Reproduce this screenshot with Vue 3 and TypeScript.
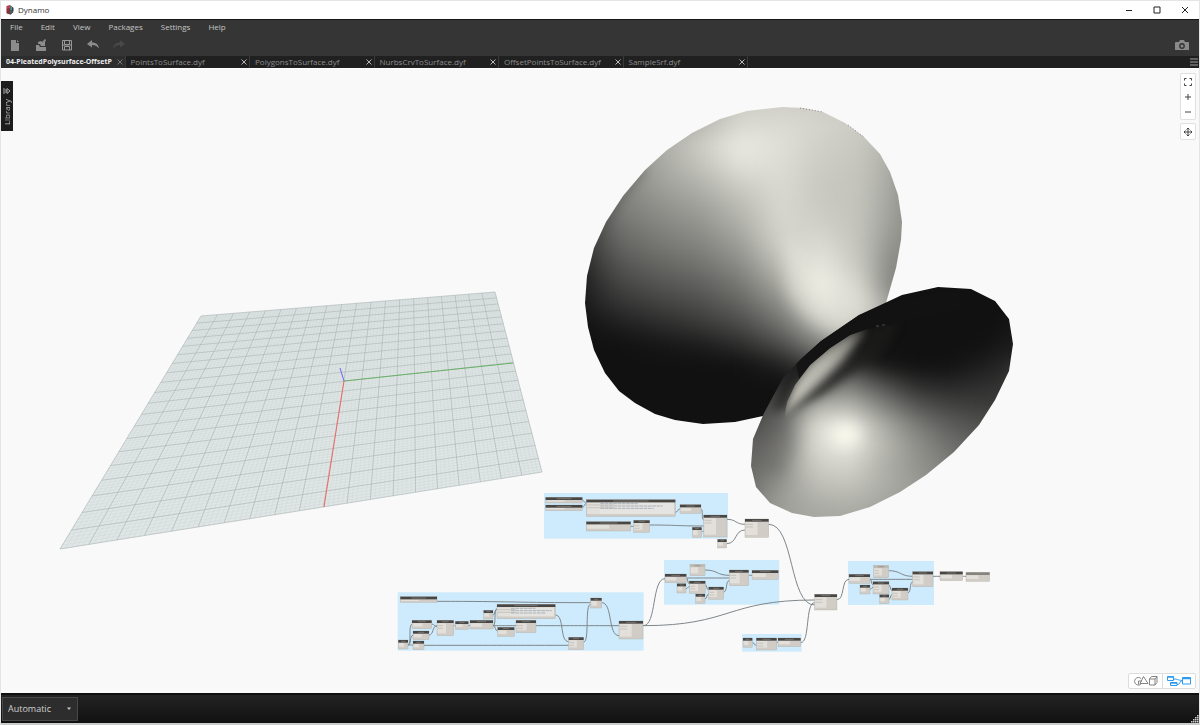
<script setup lang="ts">
import { ref } from 'vue'

type Point = [number, number]
type Wire = [number, number, number, number]
interface GraphNode { x: number; y: number; w: number; h: number; tone: string }
interface Cluster { origin: Point; groups: number[][]; nodes: GraphNode[]; wires: Wire[] }
interface Band { id: string; y: number; h: number; stops: { offset: number; color: string }[] }

const menus = ['File', 'Edit', 'View', 'Packages', 'Settings', 'Help']
const tabs = [
  '04-PleatedPolysurface-OffsetP',
  'PointsToSurface.dyf',
  'PolygonsToSurface.dyf',
  'NurbsCrvToSurface.dyf',
  'OffsetPointsToSurface.dyf',
  'SampleSrf.dyf',
]
const activeTab = ref(0)
const runMode = ref('Automatic')

/* Ground plane: a unit square projected onto four screen corners. */
const corners: Point[] = [[201, 316], [495, 292], [542, 472], [60, 549]]
function project(u: number, v: number): Point {
  const [a, b, c, d] = corners
  const dx1 = b[0] - c[0], dx2 = d[0] - c[0], sx = a[0] - b[0] + c[0] - d[0]
  const dy1 = b[1] - c[1], dy2 = d[1] - c[1], sy = a[1] - b[1] + c[1] - d[1]
  const det = dx1 * dy2 - dx2 * dy1
  const g = (sx * dy2 - dx2 * sy) / det
  const h = (dx1 * sy - sx * dy1) / det
  const w = g * u + h * v + 1
  return [
    ((b[0] - a[0] + g * b[0]) * u + (d[0] - a[0] + h * d[0]) * v + a[0]) / w,
    ((b[1] - a[1] + g * b[1]) * u + (d[1] - a[1] + h * d[1]) * v + a[1]) / w,
  ]
}
function gridPath(cells: number): string {
  const seg = (p: Point, q: Point) => `M${p[0].toFixed(2)} ${p[1].toFixed(2)}L${q[0].toFixed(2)} ${q[1].toFixed(2)}`
  let d = ''
  for (let i = 0; i <= cells; i++) {
    const t = i / cells
    d += seg(project(t, 0), project(t, 1)) + seg(project(0, t), project(1, t))
  }
  return d
}
const minorGrid = gridPath(100)
const majorGrid = gridPath(20)
const plane = corners.map((p) => p.join(',')).join(' ')

/* Surface shading: brightness rows, interpolated across and smoothed down. */
function bands(name: string, top: number, step: number, rows: number[][]): Band[] {
  return rows.map((row, r) => ({
    id: `${name}${r}`,
    y: top + r * step - step / 2,
    h: step + 1,
    stops: row.map((v, i) => ({
      offset: i / (row.length - 1),
      color: `rgb(${v},${v},${Math.round(v - Math.max(0, v - 40) * 0.045)})`,
    })),
  }))
}
const backBands = bands('back', 85, 20, [
  [90, 110, 130, 160, 205, 208, 205, 200, 190],
  [90, 110, 135, 170, 205, 208, 205, 200, 190],
  [90, 115, 155, 185, 217, 219, 212, 204, 185],
  [90, 130, 172, 204, 234, 223, 208, 200, 175],
  [90, 132, 168, 195, 225, 221, 204, 197, 165],
  [85, 130, 160, 178, 205, 218, 201, 196, 160],
  [78, 125, 146, 162, 188, 216, 202, 195, 155],
  [65, 114, 132, 147, 174, 214, 208, 195, 148],
  [52, 100, 118, 131, 157, 208, 220, 195, 135],
  [40, 84, 101, 114, 138, 190, 232, 200, 120],
  [30, 68, 83, 95, 118, 166, 240, 214, 110],
  [24, 50, 64, 76, 97, 138, 218, 226, 140],
  [17, 30, 42, 55, 73, 110, 178, 205, 150],
  [17, 17, 22, 28, 44, 74, 130, 160, 130],
  [17, 17, 17, 17, 17, 32, 70, 90, 80],
  [17, 17, 17, 17, 17, 17, 20, 40, 40],
  [17, 17, 17, 17, 17, 17, 17, 17, 17],
  [17, 17, 17, 17, 17, 17, 17, 17, 17],
  [17, 17, 17, 17, 17, 17, 17, 17, 17],
])
const frontBands = bands('front', 265, 20, [
  [17, 17, 17, 17, 17, 17, 17, 17, 17],
  [17, 17, 17, 17, 17, 17, 17, 17, 17],
  [17, 17, 17, 17, 17, 17, 17, 17, 17],
  [17, 17, 17, 17, 17, 17, 17, 17, 18],
  [17, 17, 17, 22, 17, 17, 17, 17, 28],
  [24, 26, 36, 60, 22, 17, 17, 28, 42],
  [40, 50, 96, 124, 82, 44, 38, 45, 52],
  [58, 84, 174, 184, 130, 86, 66, 60, 60],
  [66, 112, 222, 234, 176, 125, 94, 80, 74],
  [80, 140, 220, 234, 186, 146, 112, 94, 84],
  [98, 152, 204, 214, 178, 150, 125, 104, 90],
  [110, 154, 190, 195, 175, 156, 135, 110, 96],
  [128, 160, 172, 176, 166, 150, 135, 115, 100],
  [130, 160, 165, 165, 160, 148, 135, 115, 100],
])

/* Node graph, laid out in canvas units that are drawn at one third scale. */
const n = (x: number, y: number, w: number, h: number, tone = 'dark'): GraphNode => ({ x, y, w, h, tone })
const clusters: Cluster[] = [
  {
    origin: [530, 485],
    groups: [[42, 24, 552, 137]],
    nodes: [
      n(47, 37, 110, 17), n(47, 60, 110, 17), n(169, 44, 267, 50), n(450, 59, 63, 26),
      n(169, 110, 133, 28), n(311, 106, 48, 36), n(521, 90, 70, 66), n(487, 127, 28, 30),
      n(563, 163, 27, 26), n(645, 102, 71, 55),
    ],
    wires: [
      [157, 46, 169, 54], [157, 67, 169, 56], [436, 82, 450, 72], [513, 72, 521, 105],
      [302, 124, 311, 124], [359, 120, 521, 123], [515, 140, 521, 138], [591, 103, 645, 118],
      [590, 176, 645, 135],
    ],
  },
  {
    origin: [390, 585],
    groups: [[23, 22, 738, 175]],
    nodes: [
      n(31, 35, 110, 17), n(321, 58, 175, 43), n(281, 76, 28, 26), n(66, 106, 59, 25),
      n(69, 138, 48, 26), n(141, 106, 50, 46), n(196, 109, 39, 24), n(240, 106, 69, 26),
      n(323, 127, 50, 27), n(378, 106, 60, 37), n(25, 165, 29, 27), n(69, 168, 33, 26),
      n(536, 157, 45, 37), n(602, 39, 33, 30), n(687, 108, 72, 54),
    ],
    wires: [
      [141, 49, 602, 53], [54, 180, 66, 118], [54, 180, 69, 151], [54, 180, 69, 180],
      [102, 181, 536, 181], [125, 117, 141, 125], [117, 150, 141, 122], [191, 122, 196, 122],
      [235, 122, 240, 122], [309, 122, 323, 138], [309, 122, 321, 72], [309, 90, 321, 72],
      [309, 122, 378, 122], [438, 122, 687, 122], [496, 90, 536, 170], [581, 171, 602, 58],
      [635, 53, 687, 152],
    ],
  },
  {
    origin: [650, 550],
    groups: [[42, 30, 346, 134], [594, 33, 258, 132], [276, 252, 179, 53]],
    nodes: [
      n(45, 72, 64, 26), n(120, 43, 45, 34, 'light'), n(81, 101, 27, 28), n(118, 93, 48, 37),
      n(137, 132, 28, 28), n(176, 111, 45, 37), n(238, 60, 58, 47), n(306, 61, 79, 27),
      n(597, 73, 63, 27), n(671, 46, 45, 37, 'light'), n(630, 105, 30, 27), n(669, 95, 48, 37),
      n(689, 134, 28, 27), n(726, 114, 48, 36), n(788, 65, 61, 45), n(870, 65, 68, 27),
      n(948, 67, 71, 27, 'mid'), n(494, 133, 67, 47), n(279, 264, 28, 28), n(319, 264, 61, 36),
      n(384, 264, 68, 26),
    ],
    wires: [
      [109, 84, 238, 84], [109, 84, 118, 102], [165, 60, 238, 76], [108, 116, 118, 110],
      [165, 104, 176, 120], [165, 147, 176, 132], [221, 126, 238, 92], [296, 76, 306, 76],
      [660, 88, 788, 88], [660, 88, 669, 104], [716, 62, 788, 79], [660, 118, 669, 112],
      [717, 106, 726, 122], [717, 148, 726, 134], [774, 128, 788, 96], [849, 79, 870, 79],
      [938, 79, 948, 79], [561, 149, 597, 88], [307, 278, 319, 286], [380, 277, 384, 277],
      [452, 278, 494, 158], [-20, 227, 494, 150], [-20, 227, 45, 86], [356, -77, 494, 165],
    ],
  },
]
const headTone: Record<string, string> = { dark: '#474644', mid: '#85837d', light: '#bdbab4' }
function wirePath([x1, y1, x2, y2]: Wire): string {
  const k = Math.abs(x2 - x1) * 0.5 + Math.min(8, Math.abs(y2 - y1) * 0.1)
  return `M${x1} ${y1}C${x1 + k} ${y1} ${x2 - k} ${y2} ${x2} ${y2}`
}
</script>

<template>
  <div class="window">
    <header class="titlebar">
      <svg class="logo" viewBox="0 0 24 30" aria-hidden="true">
        <path d="M2 3l11-2 9 7v14l-8 7-12-4z" fill="#4b4a52" />
        <path d="M2 3l10-2v9L2 12z" fill="#c3424a" />
        <path d="M2 12l10-2v17L2 25z" fill="#8d3038" />
        <path d="M13 3l5 3v8l-5 2z" fill="#4f9a9c" />
        <path d="M13 17l7-3v8l-7 6z" fill="#3f6f4d" />
        <path d="M18 6l4 3v8l-4 2z" fill="#30405c" />
      </svg>
      <span class="title">Dynamo</span>
      <div class="winbuttons">
        <button type="button" aria-label="Minimize"><svg viewBox="0 0 8 8"><path d="M1 4.500h6" /></svg></button>
        <button type="button" aria-label="Maximize"><svg viewBox="0 0 8 8"><path d="M1 1h6v6H1z" /></svg></button>
        <button type="button" aria-label="Close"><svg viewBox="0 0 8 8"><path d="M1 1l6 6M7 1l-6 6" /></svg></button>
      </div>
    </header>

    <div class="chrome">
      <nav class="menubar">
        <button v-for="m in menus" :key="m" type="button">{{ m }}</button>
      </nav>
      <div class="toolbar">
        <button type="button" aria-label="New"><svg viewBox="0 0 12 12"><path d="M2 1h5v3h3v8H2zM8 1l2 2H8z" fill="#8c8c8c" /></svg></button>
        <button type="button" aria-label="Open"><svg viewBox="0 0 12 12"><path d="M1 6h3l1 2h6v4H1zM3 3l3-1 1 1 3-3 1 1-1 2v4H6L5 5H3z" fill="#8c8c8c" /></svg></button>
        <button type="button" aria-label="Save"><svg viewBox="0 0 12 12"><path d="M1.500 1.500h9v9.500h-9zM3.500 2v3.500h5V2M3.500 11V7.500h5V11M2 6h8" fill="none" stroke="#989898" /></svg></button>
        <button type="button" aria-label="Undo"><svg viewBox="0 0 12 12"><path d="M0 5l5-4v2.500c4 0 6.500 2 7 6-2-2.500-4-3.500-7-3.500v2.500z" fill="#8c8c8c" /></svg></button>
        <button type="button" aria-label="Redo" disabled><svg viewBox="0 0 12 12"><path d="M12 5L7 1v2.500c-4 0-6.500 2-7 6C2 7 4 6 7 6v2.500z" fill="#484848" /></svg></button>
        <button class="camera" type="button" aria-label="Export image">
          <svg viewBox="0 0 14 11"><path d="M1 2h3l1-2h4l1 2h3q1 0 1 1v7H0V3q0-1 1-1z" fill="#8a8a8a" /><circle cx="7" cy="6" r="2.200" fill="#8a8a8a" stroke="#353535" stroke-width="1.400" /></svg>
        </button>
      </div>
      <div class="tabstrip">
        <div class="tabs">
          <div v-for="(t, i) in tabs" :key="t" class="tab" :class="{ active: i === activeTab }">
            <button class="tabname" type="button" @click="activeTab = i">{{ t }}</button>
            <button class="tabclose" type="button" :aria-label="`Close ${t}`"><svg viewBox="0 0 6 6"><path d="M.5.5l5 5M5.500.5l-5 5" /></svg></button>
          </div>
        </div>
        <button class="tablist" type="button" aria-label="All tabs"><svg viewBox="0 0 8 8"><path d="M0 1h8M0 4h8M0 7h8" stroke="#a0a0a0" /></svg></button>
      </div>
    </div>

    <main class="workspace">
      <svg class="scene" viewBox="0 69 1200 624" preserveAspectRatio="xMidYMid slice" role="img" aria-label="3D preview and node graph">
        <defs>
          <filter id="soft" filterUnits="userSpaceOnUse" x="520" y="60" width="560" height="500" color-interpolation-filters="sRGB"><feGaussianBlur stdDeviation="9" /></filter>
          <filter id="glow" x="-80%" y="-100%" width="260%" height="300%" color-interpolation-filters="sRGB"><feGaussianBlur stdDeviation="8" /></filter>
          <filter id="edge" x="-40%" y="-40%" width="180%" height="180%" color-interpolation-filters="sRGB"><feGaussianBlur stdDeviation="4" /></filter>
          <linearGradient v-for="b in [...backBands, ...frontBands]" :id="b.id" :key="b.id">
            <stop v-for="s in b.stops" :key="s.offset" :offset="s.offset" :stop-color="s.color" />
          </linearGradient>
          <linearGradient id="throat" gradientUnits="userSpaceOnUse" x1="792" y1="400" x2="868" y2="334">
            <stop offset="0" stop-color="#c8c7bd" /><stop offset=".5" stop-color="#b4b3aa" /><stop offset=".8" stop-color="#8d8c85" /><stop offset="1" stop-color="#4a4947" />
          </linearGradient>
          <clipPath id="backClip"><path d="M747 111L782 107 803 108 823 112 845 123 864 137 880 154 890 172 898 195 902 222 901 240 896 268 886 303 860 345 800 400 763 416 735 422 703 424 675 420 655 414 635 403 619 391 605 373 594 350 588 327 585 303 587 276 594 248 606 222 623 196 645 170 667 150 692 133 720 119z" /></clipPath>
          <clipPath id="frontClip"><path d="M887 302L902 295 938 287 971 289 995 301 1009 319 1013 344 1009 371 995 400 979 425 954 452 926 475 900 492 870 507 840 516 814 517 792 513 770 503 756 487 751 466 753 439 764 413 783 378 801 359 821 341 859 315z" /></clipPath>
          <clipPath id="throatClip"><path d="M785 414L787 402 795 385 810 365 830 348 850 335 867 329 900 322 960 310V520H785z" /></clipPath>
        </defs>

        <polygon :points="plane" fill="#dfe6e5" />
        <path :d="minorGrid" class="minor" />
        <path :d="majorGrid" class="major" />
        <path d="M344 381L513 363" stroke="#68b068" />
        <path d="M344 381L324 507" stroke="#f06868" />
        <path d="M344 381L340 368" stroke="#6868ee" />

        <g clip-path="url(#backClip)">
          <g filter="url(#soft)">
            <rect v-for="b in backBands" :key="b.id" x="580" :y="b.y" width="320" :height="b.h" :fill="`url(#${b.id})`" />
            <rect x="900" y="75" width="60" height="260" fill="#8f8e88" />
            <rect x="540" y="75" width="40" height="180" fill="#504f4e" />
            <rect x="540" y="255" width="40" height="200" fill="#111" />
          </g>
          <path d="M786 235q26 25 40 52t34 30l-20 20q-46-20-54-50z" fill="#f4f4e8" opacity=".4" filter="url(#glow)" />
          <path d="M586 276L594 248 606 222 623 196 645 170" fill="none" stroke="#333" stroke-width="4" opacity=".4" filter="url(#edge)" />
        </g>
        <path d="M800 108L823 112M848 125L864 137" stroke="#88867f" stroke-dasharray="1 2" />

        <g clip-path="url(#frontClip)">
          <g filter="url(#soft)">
            <rect x="1014" y="255" width="60" height="110" fill="#1c1c1c" />
            <rect x="1014" y="365" width="60" height="190" fill="#4a4a48" />
            <rect x="700" y="255" width="50" height="160" fill="#222" />
            <rect x="700" y="415" width="50" height="140" fill="#686764" />
            <rect v-for="b in frontBands" :key="b.id" x="750" :y="b.y" width="264" :height="b.h" :fill="`url(#${b.id})`" />
          </g>
          <path d="M786 416L796 445 782 480 758 470 762 425 785 385z" fill="#5c5b58" opacity=".4" filter="url(#glow)" />
          <ellipse cx="846" cy="435" rx="14" ry="9" fill="#fffff2" filter="url(#glow)" />
          <g clip-path="url(#throatClip)">
            <path d="M786 413L812 390 838 368 858 350 866 326 900 322 886 350 852 373 822 395z" fill="#1d1d1c" opacity=".7" filter="url(#edge)" />
            <path d="M780 412L796 370 820 342 862 320 864 334 854 346 842 361 824 378 805 395 786 412z" fill="url(#throat)" filter="url(#edge)" />
          </g>
          <path d="M772 412L783 378 821 341 860 315 867 329 850 335 830 348 810 365 795 385 786 408z" fill="#181818" opacity=".6" filter="url(#edge)" />
          <path d="M796 362L821 341 859 315 900 300 960 290V310L900 322 867 329 850 335 830 348 810 365 799 379z" fill="#131313" opacity=".85" />
          <path d="M876 326h3M882 325h3" stroke="#4a4a48" />
        </g>

        <g v-for="(c, ci) in clusters" :key="`g${ci}`" :transform="`translate(${c.origin[0]} ${c.origin[1]}) scale(.3333)`">
          <rect v-for="(g, gi) in c.groups" :key="gi" :x="g[0]" :y="g[1]" :width="g[2]" :height="g[3]" fill="#cdebfd" />
        </g>
        <g v-for="(c, ci) in clusters" :key="`c${ci}`" :transform="`translate(${c.origin[0]} ${c.origin[1]}) scale(.3333)`">
          <path v-for="(w, wi) in c.wires" :key="`w${wi}`" :d="wirePath(w)" class="wire" />
          <g v-for="(d, di) in c.nodes" :key="`n${di}`">
            <rect :x="d.x" :y="d.y" :width="d.w" :height="d.h" fill="#d1cdc6" stroke="#aaa69f" />
            <rect :x="d.x + 2" :y="d.y + 9" :width="d.w * 0.5" :height="Math.max(4, d.h - 16)" fill="#e3e0dc" />
            <rect v-if="d.w > 150" :x="d.x + 40" :y="d.y + 9" :width="d.w - 44" :height="d.h - 16" fill="#e6e4e1" />
            <path v-if="d.w > 150" :d="`M${d.x + 42} ${d.y + 12}h${d.w * 0.42}m${-d.w * 0.42} 7h${d.w * 0.7}m${-d.w * 0.7} 7h${d.w * 0.6}`" stroke="#8b99a8" stroke-width="2" stroke-dasharray="11 2" fill="none" />
            <path v-if="d.h > 34" :d="`M${d.x + 3} ${d.y + 16}h${d.w * 0.3}m${-d.w * 0.3} 8h${d.w * 0.3}`" stroke="#b7b3ad" stroke-width="2" fill="none" />
            <rect :x="d.x" :y="d.y" :width="d.w" height="8" :fill="headTone[d.tone]" />
            <path :d="`M${d.x + d.w * 0.3} ${d.y + 4}h${d.w * 0.4}`" stroke="#8c8984" stroke-width="2" />
          </g>
        </g>
      </svg>

      <button class="library" type="button">
        <svg viewBox="0 0 8 8" aria-hidden="true"><path d="M1 1v6M3 2v4M4 1.500L7 4 4 6.500z" stroke="#aaa" stroke-width="1" fill="none" /></svg>
        <span>Library</span>
      </button>

      <div class="viewtools">
        <div class="card">
          <button type="button" aria-label="Fit to view"><svg viewBox="0 0 10 10"><path d="M1.500 3.500v-2h2M6.500 1.500h2v2M8.500 6.500v2h-2M3.500 8.500h-2v-2" /></svg></button>
          <button type="button" aria-label="Zoom in"><svg viewBox="0 0 10 10"><path d="M5 2v6M2 5h6" /></svg></button>
          <button type="button" aria-label="Zoom out"><svg viewBox="0 0 10 10"><path d="M2 5h6" /></svg></button>
        </div>
        <div class="card">
          <button type="button" aria-label="Pan"><svg viewBox="0 0 10 10"><path d="M5 1v8M1 5h8M3.500 2.500L5 1l1.500 1.500M3.500 7.500L5 9l1.500-1.500M2.500 3.500L1 5l1.500 1.500M7.500 3.500L9 5 7.500 6.500" /></svg></button>
        </div>
      </div>

      <div class="modes">
        <button type="button" aria-label="Geometry view">
          <svg viewBox="0 0 26 12"><path d="M8.500 8.500A3.800 3.800 0 1 1 8 3.500M5.500 6H9M5.500 6v3.500M10.500 1.500L15 8.500H7zM16.500 4h5.500v6h-5.500zM16.500 4l2-2.500H24L22 4M24 1.500V7.500l-2 2.500" fill="none" stroke="#777" stroke-width=".9" /></svg>
        </button>
        <button type="button" aria-label="Graph view">
          <svg viewBox="0 0 26 12"><g fill="#fff" stroke="#2a9bf0"><path d="M7.500 4C12 4 11 5 16 5.500M11 9.500C15 9.500 13 6 16 6" fill="none" /><path d="M1.500 1.500h6v4h-6zM4.500 7.500h6.500v3H4.500zM16.500 2.500h8v6.500h-8z" /><path d="M1.500 2h6M4.500 8H11M16.500 3.500h8" stroke-width="1.500" /></g></svg>
        </button>
      </div>
    </main>

    <footer class="statusbar">
      <label class="run">
        <select v-model="runMode" aria-label="Run mode">
          <option>Automatic</option>
          <option>Manual</option>
        </select>
        <svg viewBox="0 0 6 4" aria-hidden="true"><path d="M1 .5h4L3 3z" fill="#c8c8c8" /></svg>
      </label>
      <svg class="grip" viewBox="0 0 8 8" aria-hidden="true"><path d="M6 0h1.500v1.500H6zM4 2h1.500v1.500H4zM6 2h1.500v1.500H6zM2 4h1.500v1.500H2zM4 4h1.500v1.500H4zM6 4h1.500v1.500H6zM0 6h1.500v1.500H0zM2 6h1.500v1.500H2zM4 6h1.500v1.500H4zM6 6h1.500v1.500H6z" fill="#cfcfcf" /></svg>
    </footer>
  </div>
</template>

<style>
body { background: #f9f9f9; }
</style>

<style scoped>
.window {
  box-sizing: border-box;
  display: flex;
  flex-direction: column;
  min-height: 100vh;
  border: 1px solid #e4e6e6;
  border-bottom: 2px solid #c9cccb;
  background: #f9f9f9;
  font-family: "Open Sans", "Noto Sans", sans-serif;
  font-size: 8px;
  line-height: 12px;
}
button {
  margin: 0;
  padding: 0;
  border: 0;
  background: none;
  color: inherit;
  font: inherit;
  display: flex;
  align-items: center;
  justify-content: center;
}
svg { display: block; flex: none; }
.titlebar {
  display: flex;
  align-items: center;
  height: 18px;
  padding-left: 5px;
  background: #fff;
  color: #333;
}
.logo { width: 8px; height: 10px; margin-right: 4px; }
.winbuttons { display: flex; margin-left: auto; }
.winbuttons button { width: 28px; height: 18px; }
.winbuttons svg { width: 8px; height: 8px; fill: none; stroke: #222; }
.chrome { background: #353535; border-top: 1px solid #161616; }
.menubar { display: flex; height: 14px; color: #c4c4c4; }
.menubar button { padding: 0 9px; }
.toolbar { display: flex; align-items: center; height: 22px; padding: 0 4px 0 1px; }
.toolbar button { width: 26px; height: 20px; }
.toolbar svg { width: 12px; height: 12px; }
.toolbar .camera { margin-left: auto; }
.camera svg { width: 14px; height: 11px; }
.tabstrip { display: flex; justify-content: space-between; height: 12px; background: #202020; }
.tabs { display: grid; grid-template-columns: repeat(6, 1fr); width: 747px; }
.tab {
  display: flex;
  min-width: 0;
  height: 12px;
  border-right: 1px solid #393939;
  padding-left: 5px;
  color: #8d8d8d;
}
.tab.active { background: #2d2d2d; color: #eee; font-size: 7px; font-weight: 700; }
.tabname { flex: 1; min-width: 0; white-space: nowrap; justify-content: flex-start; }
.tabclose { width: 10px; }
.tabclose svg { width: 6px; height: 6px; stroke: #b8b8b8; fill: none; }
.active .tabclose svg { stroke: #777; }
.tablist { width: 10px; }
.tablist svg { width: 8px; height: 8px; }
.workspace { position: relative; flex: 1; min-height: 240px; border-top: 1px solid #fff; }
.scene { position: absolute; width: 100%; height: 100%; }
.minor { fill: none; stroke: #a9b8ba; stroke-width: .5; opacity: .25; }
.major { fill: none; stroke: #a3abab; stroke-width: .7; opacity: .7; }
.wire { fill: none; stroke: #7e868a; stroke-width: 3; }
.library {
  position: absolute;
  left: 0;
  top: 12px;
  width: 12px;
  height: 50px;
  flex-direction: column;
  gap: 4px;
  background: #1d1d1d;
  color: #bbb;
}
.library svg { width: 8px; height: 8px; }
.library span { writing-mode: vertical-rl; transform: rotate(180deg); }
.viewtools {
  position: absolute;
  top: 4px;
  right: 3px;
  display: flex;
  flex-direction: column;
  gap: 3px;
}
.card { border: 1px solid #e0e0e0; border-radius: 2px; background: #fff; }
.card button { width: 14px; height: 15px; }
.card svg { width: 10px; height: 10px; fill: none; stroke: #444; }
.modes {
  position: absolute;
  right: 3px;
  bottom: 4px;
  display: flex;
  border: 1px solid #ddd;
  border-radius: 2px;
  background: #fff;
}
.modes button { width: 33px; height: 14px; }
.modes button + button { border-left: 1px solid #ddd; }
.modes svg { width: 26px; height: 12px; }
.statusbar {
  display: flex;
  align-items: center;
  justify-content: space-between;
  height: 28px;
  border-top: 2px solid #101010;
  background: linear-gradient(#232323, #111);
}
.run { display: grid; align-items: center; margin-left: 1px; }
.run select {
  grid-area: 1 / 1;
  appearance: none;
  width: 76px;
  height: 24px;
  padding: 0 5px;
  border: 1px solid #484848;
  border-radius: 0;
  background: #2d2d2d;
  color: #d0d0d0;
  font: inherit;
  font-size: 9px;
}
.run svg { grid-area: 1 / 1; justify-self: end; width: 6px; height: 4px; margin-right: 6px; pointer-events: none; }
.grip { width: 8px; height: 8px; align-self: flex-end; }
</style>
